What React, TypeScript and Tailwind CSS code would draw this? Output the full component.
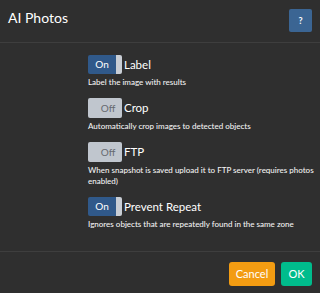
import React from "react";

function Toggle({ on }: { on: boolean }) {
  if (on) {
    return (
      <div className="flex h-[19px] w-[34px] shrink-0 overflow-hidden rounded-[2px]">
        <div className="flex flex-1 items-center justify-center bg-[#30598a] text-[10px] text-white">On</div>
        <div className="w-[6px] bg-[#c9ced5]" />
      </div>
    );
  }
  return (
    <div className="flex h-[20px] w-[34px] shrink-0 items-center justify-center overflow-hidden rounded-[2px] bg-[#c0c6ce] pl-[6px] text-[10px] text-[#666a70]">
      Off
    </div>
  );
}

function Row({ on, label, desc }: { on: boolean; label: string; desc: React.ReactNode }) {
  return (
    <div className="flex flex-col">
      <div className="flex items-center gap-[2px]">
        <Toggle on={on} />
        <span className="text-[11.5px] leading-none text-white">{label}</span>
      </div>
      <div className="mt-[3px] text-[8px] font-medium leading-[11px] text-[#f2f2f2]">{desc}</div>
    </div>
  );
}

export default function App() {
  return (
    <div
      className="flex h-[293px] w-[320px] flex-col bg-[#2f2f2f]"
      style={{ fontFamily: "Lato, 'Noto Sans', sans-serif" }}
    >
      <div className="flex h-[43px] items-start justify-between border-b border-[#3e3e3e] pl-[8px] pr-[8px] pt-[9px]">
        <div className="text-[14px] leading-[18px] text-white">AI Photos</div>
        <div className="flex h-[23px] w-[23px] items-center justify-center rounded-[2px] bg-[#3b6593] text-[9px] font-bold text-white">
          ?
        </div>
      </div>
      <div className="flex flex-1 flex-col gap-[10px] pl-[88px] pr-[4px] pt-[12px]">
        <Row on label="Label" desc="Label the image with results" />
        <Row on={false} label="Crop" desc="Automatically crop images to detected objects" />
        <Row
          on={false}
          label="FTP"
          desc={
            <>
              <span className="whitespace-nowrap">When snapshot is saved upload it to FTP server (requires photos</span>
              <br />
              enabled)
            </>
          }
        />
        <Row on label="Prevent Repeat" desc="Ignores objects that are repeatedly found in the same zone" />
      </div>
      <div className="flex h-[42px] items-start justify-end gap-[6px] border-t border-[#3e3e3e] pr-[8px] pt-[10px]">
        <div className="flex h-[24px] w-[46px] items-center justify-center rounded-[3px] bg-[#f39c12] text-[11px] text-white">
          Cancel
        </div>
        <div className="flex h-[24px] w-[31px] items-center justify-center rounded-[3px] bg-[#00bc8c] text-[11px] text-white">
          OK
        </div>
      </div>
    </div>
  );
}
